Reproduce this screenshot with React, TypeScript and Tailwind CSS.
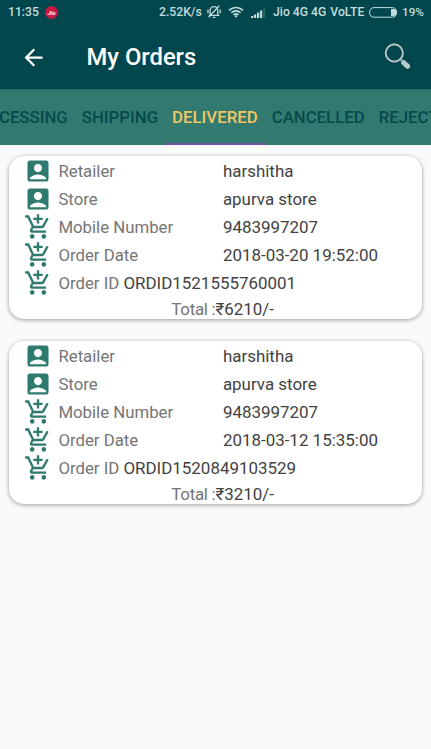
import { MdAccountBox, MdAddShoppingCart, MdArrowBack } from 'react-icons/md'

// ---------------------------------------------------------------------------
// Data
// ---------------------------------------------------------------------------

interface Order {
  id: string
  retailer: string
  store: string
  mobile: string
  date: string
  total: number
}

const ORDERS: Order[] = [
  {
    id: 'ORDID1521555760001',
    retailer: 'harshitha',
    store: 'apurva store',
    mobile: '9483997207',
    date: '2018-03-20 19:52:00',
    total: 6210,
  },
  {
    id: 'ORDID1520849103529',
    retailer: 'harshitha',
    store: 'apurva store',
    mobile: '9483997207',
    date: '2018-03-12 15:35:00',
    total: 3210,
  },
]

const TABS = ['PROCESSING', 'SHIPPING', 'DELIVERED', 'CANCELLED', 'REJECTED']

// ---------------------------------------------------------------------------
// Status bar
// ---------------------------------------------------------------------------

function SilentIcon() {
  return (
    <svg viewBox="0 0 14 14" className="w-3.5 h-3.5" fill="none" stroke="currentColor" strokeWidth="1.3">
      <path d="M3.2 10V5.4a3.8 3.8 0 0 1 7.6 0V10M1.8 10.4h10.6M5.6 12.3h2.8M12.2.8 1.6 12.4M1 4.4v3.8M13.2 4.4v3.8" />
    </svg>
  )
}

function WifiIcon() {
  return (
    <svg viewBox="0 0 16 12" className="w-4 h-3" fill="none" stroke="currentColor" strokeWidth="1.6">
      <path d="M1 4.4a10 10 0 0 1 14 0M3.3 6.8a6.7 6.7 0 0 1 9.4 0M5.5 9a3.7 3.7 0 0 1 5 0" />
      <path d="M8 11.8 6.4 10a2.2 2.2 0 0 1 3.2 0z" fill="currentColor" stroke="none" />
    </svg>
  )
}

function SignalIcon() {
  return (
    <svg viewBox="0 0 15 10" className="w-[15px] h-2.5" fill="currentColor">
      <path d="M0 8h2.2v2H0zM3 6.5h2.2V10H3zM6 4.5h2.2V10H6zM9 2.5h2.2V10H9z" />
      <path d="M12.3 0.5h1.6V10h-1.6z" opacity="0.25" />
    </svg>
  )
}

function StatusBar() {
  return (
    <div className="flex items-center h-[25px] pl-2 pr-2 text-[12.2px] font-medium text-[#c3dcdc]">
      <span className="w-[37px] whitespace-nowrap">11:35</span>
      <span className="flex items-center justify-center w-[13px] h-[13px] rounded-full bg-[#c5173f] text-[6px] italic font-bold text-white">
        Jio
      </span>
      <span className="ml-auto w-12 whitespace-nowrap">2.52K/s</span>
      <span className="mb-0.5 flex"><SilentIcon /></span>
      <span className="ml-[7px] mb-px flex"><WifiIcon /></span>
      <span className="ml-[7px] flex"><SignalIcon /></span>
      <span className="ml-[7px] w-[96px] whitespace-nowrap">Jio 4G 4G <span className="ml-px">VoLTE</span></span>
      <svg viewBox="0 0 29 11" className="w-[29px] h-[11px]" fill="none">
        <rect x="0.6" y="0.6" width="27" height="9.6" rx="4.3" stroke="currentColor" />
        <path d="M22 2h2.3a3.4 3.4 0 0 1 0 6.9H22z" fill="currentColor" />
      </svg>
      <span className="ml-1 w-[21px] whitespace-nowrap text-[11.7px]">19%</span>
    </div>
  )
}

// ---------------------------------------------------------------------------
// App bar + tabs
// ---------------------------------------------------------------------------

function SearchIcon() {
  return (
    <svg viewBox="0 0 28 28" className="w-7 h-7" fill="none">
      <circle cx="10.3" cy="10" r="8.6" stroke="#002f35" strokeOpacity="0.6" strokeWidth="3.6" />
      <path d="m16.6 16.4 3 3" stroke="#a9c1c3" strokeWidth="2.4" />
      <path d="m19.6 19.6 4 3.6" stroke="#002f35" strokeOpacity="0.6" strokeWidth="7" strokeLinecap="round" />
      <path d="m19.6 19.6 4 3.6" stroke="#b3c9ca" strokeWidth="5.2" strokeLinecap="round" />
      <circle cx="10.3" cy="10" r="8.6" stroke="#a9c1c3" strokeWidth="2.1" />
    </svg>
  )
}

function AppBar() {
  return (
    <div className="flex items-center h-16 pl-5 pr-[19px] text-white">
      <MdArrowBack className="w-[27px] h-[27px]" />
      <h1 className="ml-[39.5px] pt-px text-[23.8px] font-medium leading-none">My Orders</h1>
      <span className="ml-auto"><SearchIcon /></span>
    </div>
  )
}

function Tabs() {
  return (
    <div className="flex justify-center h-14 pr-[6px] bg-[#32796f] border-t border-[#246a66] overflow-hidden text-[16.8px] font-medium">
      {TABS.map((tab) => (
        <div
          key={tab}
          className={`flex items-center shrink-0 px-[7px] pt-[3px] border-b-2 ${
            tab === 'DELIVERED' ? 'text-[#efc763] border-[#7452a6]' : 'text-[#06494d] border-transparent'
          }`}
        >
          {tab}
        </div>
      ))}
    </div>
  )
}

// ---------------------------------------------------------------------------
// Order card
// ---------------------------------------------------------------------------

interface RowProps {
  icon: 'account' | 'cart'
  label: string
  value: string
}

function Row({ icon, label, value }: RowProps) {
  const Icon = icon === 'account' ? MdAccountBox : MdAddShoppingCart
  return (
    <div className="flex items-center h-7">
      <Icon className="w-7 h-7 text-[#2f7a6e]" />
      <span className="ml-1.5 w-[164.5px] text-[16.8px] text-[#757575]">{label}</span>
      <span>{value}</span>
    </div>
  )
}

function OrderCard({ order }: { order: Order }) {
  return (
    <div className="h-[163px] pt-px pl-[15px] rounded-[15px] bg-white shadow-[0_1px_4px_rgba(0,0,0,0.38)] text-[16.95px] leading-none text-[#424242]">
      <Row icon="account" label="Retailer" value={order.retailer} />
      <Row icon="account" label="Store" value={order.store} />
      <Row icon="cart" label="Mobile Number" value={order.mobile} />
      <Row icon="cart" label="Order Date" value={order.date} />
      <div className="flex items-center h-7">
        <MdAddShoppingCart className="w-7 h-7 text-[#2f7a6e]" />
        <span className="ml-1.5 w-[65px] text-[16.8px] text-[#757575]">Order ID</span>
        <span>{order.id}</span>
      </div>
      <div className="flex pt-1">
        <span className="w-[191px] text-right tracking-[-0.3px] text-[#757575]">Total :</span>
        <span>₹{order.total}/-</span>
      </div>
    </div>
  )
}

export default function App() {
  return (
    <div className="w-[431px] h-[749px] overflow-hidden bg-[#fafafa] font-[Roboto,sans-serif]">
      <header className="bg-[#02474e]">
        <StatusBar />
        <AppBar />
        <Tabs />
      </header>
      <main className="flex flex-col gap-[22px] pt-[11px] pl-[9.4px] pr-[9.5px]">
        {ORDERS.map((order) => (
          <OrderCard key={order.id} order={order} />
        ))}
      </main>
    </div>
  )
}
